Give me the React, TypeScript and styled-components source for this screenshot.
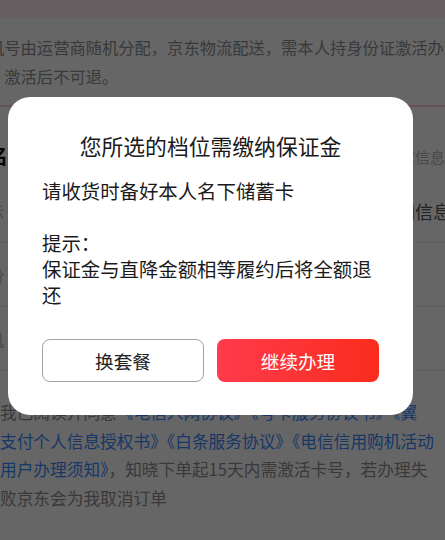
import React from 'react';
import styled, { createGlobalStyle } from 'styled-components';

const GlobalStyle = createGlobalStyle`
  html, body {
    margin: 0;
    padding: 0;
    background: #ffffff;
    overflow: hidden;
  }
  body {
    font-family: 'Noto Sans CJK SC', 'Noto Sans', sans-serif;
  }
`;

const Page = styled.div`
  width: 490px;
  margin-left: -24px;
  padding: 0 12px;
  box-sizing: border-box;
  background: #ffffff;
`;

const TopBand = styled.div`
  height: 18px;
  margin: 0 -12px;
  background: #ffeef2;
`;

const Notice = styled.p`
  margin: 0;
  padding-top: 15px;
  font-size: 16.3px;
  line-height: 29px;
  color: #909090;
  white-space: nowrap;
`;

const RedLine = styled.div`
  height: 2px;
  margin: 14px -12px 0;
  background: #ffc5cc;
`;

const Section = styled.section`
  display: flex;
  flex-direction: column;
`;

const SectionHead = styled.div`
  display: flex;
  justify-content: space-between;
  align-items: center;
  padding: 35px 9px 9px 0;
`;

const SectionTitle = styled.h2`
  margin: 0 0 0 -20px;
  font-size: 20px;
  line-height: 28px;
  font-weight: 700;
  color: #111111;
`;

const SectionHint = styled.span`
  font-size: 15px;
  color: #b8b8b8;
`;

const FormRow = styled.div`
  display: flex;
  justify-content: space-between;
  align-items: center;
  height: 63px;
  padding-right: 3px;
  border-bottom: 1px solid #ececec;
`;

const RowLabel = styled.span`
  margin-left: -16px;
  font-size: 16px;
  color: #bbbbbb;
`;

const RowValue = styled.span`
  font-size: 18px;
  color: #555555;
`;

const Agreement = styled.p`
  margin: 27px 0 0;
  padding-left: 12px;
  font-size: 16.7px;
  line-height: 28.5px;
  color: #909090;
  white-space: nowrap;
`;

const Link = styled.span`
  color: #3a8cff;
`;

const Overlay = styled.div`
  position: fixed;
  inset: 0;
  display: flex;
  align-items: flex-start;
  padding: 97px 0 0 8px;
  background: rgba(0, 0, 0, 0.6);
`;

const Dialog = styled.div`
  width: 405px;
  box-sizing: border-box;
  padding: 34px 34px 33px;
  border-radius: 22px;
  background: #ffffff;
`;

const DialogTitle = styled.h3`
  margin: 0;
  font-size: 21.8px;
  line-height: 30px;
  font-weight: 400;
  text-align: center;
  color: #1a1a1a;
`;

const DialogBody = styled.div`
  margin-top: 17px;
  font-size: 19.4px;
  line-height: 26px;
  color: #1a1a1a;
`;

const BodyLine = styled.p<{ gapBefore?: boolean }>`
  margin: ${props => (props.gapBefore ? '26px 0 0' : '0')};
`;

const ButtonRow = styled.div`
  display: grid;
  grid-template-columns: 1fr 1fr;
  gap: 13px;
  margin-top: 31px;
`;

const DialogButton = styled.button<{ primary?: boolean }>`
  height: 43px;
  border-radius: 8px;
  font-family: inherit;
  font-size: 18.6px;
  cursor: pointer;
  border: ${props => (props.primary ? 'none' : '1px solid #a3a3a3')};
  background: ${props =>
    props.primary ? 'linear-gradient(90deg, #ff3b4c, #fa2c1c)' : '#ffffff'};
  color: ${props => (props.primary ? '#ffffff' : '#222222')};
`;

const App: React.FC = () => {
  return (
    <>
      <GlobalStyle />
      <Page>
        <TopBand />
        <Notice>
          机号由运营商随机分配，京东物流配送，需本人持身份证激活办理
          <br />
          ，激活后不可退。
        </Notice>
        <RedLine />
        <Section>
          <SectionHead>
            <SectionTitle>实名信息</SectionTitle>
            <SectionHint>请填写真实信息</SectionHint>
          </SectionHead>
          <FormRow>
            <RowLabel>提示</RowLabel>
            <RowValue>填写入网信息</RowValue>
          </FormRow>
          <FormRow>
            <RowLabel>身份</RowLabel>
          </FormRow>
          <FormRow>
            <RowLabel>手机</RowLabel>
          </FormRow>
        </Section>
        <Agreement>
          我已阅读并同意<Link>《电信入网协议》《号卡服务协议书》《翼</Link>
          <br />
          <Link>支付个人信息授权书》《白条服务协议》《电信信用购机活动</Link>
          <br />
          <Link>用户办理须知》</Link>，知晓下单起15天内需激活卡号，若办理失
          <br />
          败京东会为我取消订单
        </Agreement>
      </Page>
      <Overlay>
        <Dialog>
          <DialogTitle>您所选的档位需缴纳保证金</DialogTitle>
          <DialogBody>
            <BodyLine>请收货时备好本人名下储蓄卡</BodyLine>
            <BodyLine gapBefore>提示：</BodyLine>
            <BodyLine>保证金与直降金额相等履约后将全额退还</BodyLine>
          </DialogBody>
          <ButtonRow>
            <DialogButton>换套餐</DialogButton>
            <DialogButton primary>继续办理</DialogButton>
          </ButtonRow>
        </Dialog>
      </Overlay>
    </>
  );
};

export default App;
